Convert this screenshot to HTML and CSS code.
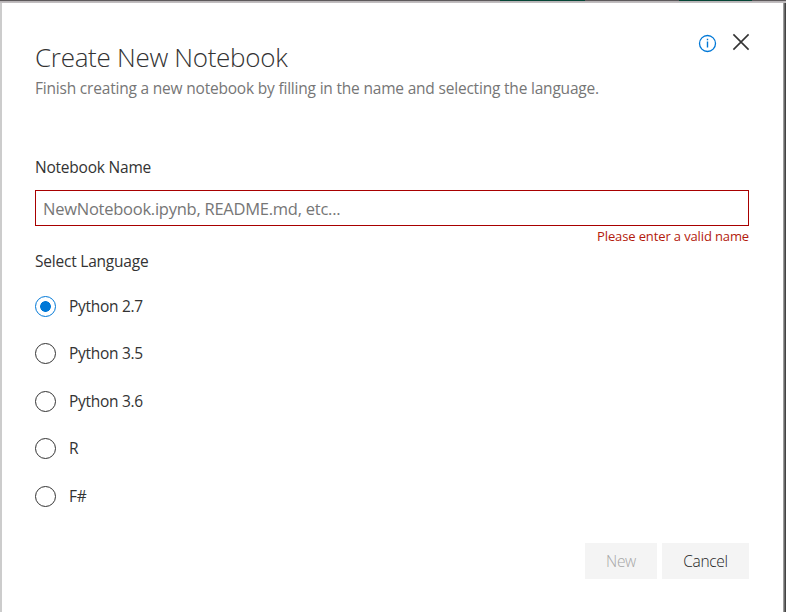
FILE: index.html
```html
<!DOCTYPE html>
<html lang="en">
<head>
<meta charset="utf-8">
<title>Create New Notebook</title>
<link rel="stylesheet" href="styles.css">
</head>
<body>
<div class="backdrop"><i class="tab tab-left"></i><i class="tab tab-right"></i></div>
<main class="dialog">
  <header class="header">
    <div>
      <h1 class="title">Create New Notebook</h1>
      <p class="subtitle">Finish creating a new notebook by filling in the name and selecting the language.</p>
    </div>
    <div class="actions">
      <svg class="info" width="19" height="19" viewBox="0 0 19 19" fill="none" stroke="#0078d7"><circle cx="9.5" cy="9.5" r="8" stroke-width="1.3"/><path d="M9.5 7.5v6M9.5 4.8v1.5" stroke-width="1.4"/></svg>
      <svg class="close" width="18" height="18" viewBox="0 0 18 18" fill="none" stroke="#333" stroke-width="1.6"><path d="M1.4 1.4l15.2 15.2M16.6 1.4L1.4 16.6"/></svg>
    </div>
  </header>
  <label class="label name-label" for="name">Notebook Name</label>
  <input class="field" id="name" placeholder="NewNotebook.ipynb, README.md, etc...">
  <div class="error"><span>Please enter a valid name</span></div>
  <div class="label language-label">Select Language</div>
  <div class="options">
    <label class="option"><i class="radio selected"></i><span>Python 2.7</span></label>
    <label class="option"><i class="radio"></i><span>Python 3.5</span></label>
    <label class="option"><i class="radio"></i><span>Python 3.6</span></label>
    <label class="option"><i class="radio"></i><span>R</span></label>
    <label class="option"><i class="radio"></i><span>F#</span></label>
  </div>
  <footer class="footer">
    <button class="button new" disabled>New</button>
    <button class="button cancel">Cancel</button>
  </footer>
</main>
</body>
</html>
```
FILE: styles.css
```css
* { box-sizing: border-box; }
html, body { margin: 0; height: 612px; overflow: hidden; }
body {
  background: linear-gradient(90deg, #ccc 0, #ccc 2px, #aaa 783px, #8f8f8f 784px, #444 785px);
  font: 15.5px/20px "Open Sans", "Noto Sans", sans-serif;
  letter-spacing: -.22px;
  color: #333;
}
.backdrop { display: flex; height: 3px; background: linear-gradient(#5d595b 0, #5d595b 1px, #b5b1b3 1px, #c5c2c4 3px); padding-left: 500px; }
.tab { height: 1px; background: #044535; }
.tab-left { width: 85px; margin-right: 94px; }
.tab-right { width: 73px; }
.dialog { margin: 0 3px 0 2px; height: 609px; background: #fff; padding: 31px 34px 0 33px; }
.header { display: flex; justify-content: space-between; height: 120px; }
.title { margin: 5px 0 0; font-size: 26px; line-height: 36px; font-weight: 300; letter-spacing: -.3px; white-space: nowrap; }
.subtitle { margin: 2px 0 0; line-height: 22px; color: #767676; letter-spacing: -.2px; white-space: nowrap; }
.actions { display: flex; gap: 15px; margin-right: -1px; }
.info { display: block; }
.close { display: block; margin-top: -1px; }
.label { display: block; height: 20px; line-height: 22px; }
.name-label { margin-top: 2px; }
.field { display: block; width: 714px; height: 36px; margin-top: 14px; padding: 1px 7px 0; border: 1px solid #a80000; border-radius: 0; background: #fff; font: inherit; font-size: 16.5px; letter-spacing: -.25px; }
.field::placeholder { color: #767676; opacity: 1; }
.error { text-align: right; height: 20px; font-size: 13px; line-height: 20px; letter-spacing: -.13px; color: #b31a0c; }
.language-label { margin-top: 4px; }
.options { display: flex; flex-direction: column; gap: 26.6px; margin-top: 25.6px; letter-spacing: -.3px; }
.option { display: flex; align-items: center; height: 21px; gap: 13px; }
.option span { margin-top: -1px; }
.radio { width: 21px; height: 21px; flex: none; border: 1.4px solid #333; border-radius: 50%; }
.radio.selected { border-color: #0078d7; background: radial-gradient(circle, #0078d7 5px, transparent 5.7px); }
.footer { display: flex; justify-content: flex-end; gap: 5px; margin-top: 36px; }
.button { height: 36px; border: 0; padding: 0; background: #f4f4f4; font: 300 15.5px/36px "Open Sans", sans-serif; letter-spacing: -.3px; color: #1c1c1c; }
.new { width: 72px; color: #a6a6a6; }
.cancel { width: 87px; }
```
